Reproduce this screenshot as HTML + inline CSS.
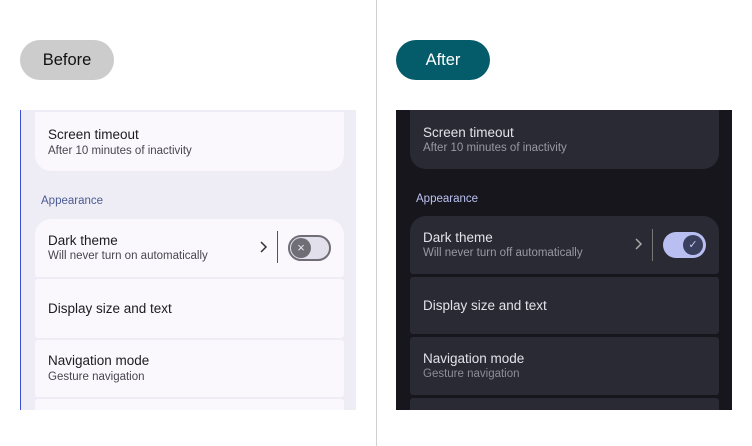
<!DOCTYPE html><html><head><style>
*{margin:0;padding:0;box-sizing:border-box}
body{width:752px;height:446px;background:#fff;position:relative;overflow:hidden;font-family:"Liberation Sans",sans-serif}
.a{position:absolute}
.pill{position:absolute;top:40px;width:94px;height:40px;border-radius:20px;font-size:16.5px;display:flex;align-items:center;justify-content:center}
.panel{position:absolute;top:110px;width:336px;height:300px;overflow:hidden}
.card{position:absolute;left:14px;width:309px}
.t{position:absolute;left:13px;font-size:13.5px}
.s{position:absolute;left:13px;font-size:11.5px}
</style></head><body>
<div class="a" style="left:376px;top:0;width:1px;height:446px;background:#d0d0d0"></div>
<div class="pill" style="left:20px;background:#cccccc;color:#111">Before</div>
<div class="pill" style="left:396px;background:#045c6a;color:#fff">After</div>

<div class="panel" style="left:20px;background:#eeedf5;border-left:1px solid #3d4fd6">
 <div class="card" style="top:2px;height:59px;background:#faf8fd;border-radius:0 0 16px 16px"><div class="t" style="top:15px;color:#1c1b1f">Screen timeout</div><div class="s" style="top:33px;color:#48464e">After 10 minutes of inactivity</div></div>
 <div class="a" style="left:20px;top:85px;font-size:11.5px;color:#4c5a94">Appearance</div>
 <div class="card" style="top:109px;height:58px;background:#faf8fd;border-radius:16px 16px 3px 3px"><div class="t" style="top:14px;color:#1c1b1f">Dark theme</div><div class="s" style="top:31px;color:#48464e">Will never turn on automatically</div>
  <svg class="a" style="left:224px;top:21px" width="10" height="14"><path d="M2 2 L7 7 L2 12" stroke="#333" stroke-width="1.5" fill="none"/></svg>
  <div class="a" style="left:242px;top:12px;width:1px;height:32px;background:#555"></div>
  <div class="a" style="left:253px;top:16px;width:43px;height:26px;border-radius:13px;background:#e2e0ea;border:2px solid #6f6d76"></div>
  <div class="a" style="left:256px;top:19px;width:20px;height:20px;border-radius:50%;background:#6f6d76;color:#e8e6ee;font-size:13px;text-align:center;line-height:20px">×</div>
 </div>
 <div class="card" style="top:169px;height:59px;background:#faf8fd;border-radius:3px"><div class="t" style="top:22px;color:#1c1b1f">Display size and text</div></div>
 <div class="card" style="top:230px;height:57px;background:#faf8fd;border-radius:3px"><div class="t" style="top:13px;color:#1c1b1f">Navigation mode</div><div class="s" style="top:31px;color:#48464e">Gesture navigation</div></div>
 <div class="card" style="top:289px;height:30px;background:#faf8fd;border-radius:3px"></div>
</div>

<div class="panel" style="left:396px;background:#16161c">
 <div class="card" style="top:0;height:59px;background:#292a33;border-radius:0 0 16px 16px"><div class="t" style="top:15px;color:#e4e2ea">Screen timeout</div><div class="s" style="top:32px;color:#9a98a2">After 10 minutes of inactivity</div></div>
 <div class="a" style="left:20px;top:83px;font-size:11.5px;color:#bcc3f3">Appearance</div>
 <div class="card" style="top:106px;height:58px;background:#292a33;border-radius:16px 16px 3px 3px"><div class="t" style="top:14px;color:#e4e2ea">Dark theme</div><div class="s" style="top:31px;color:#9a98a2">Will never turn off automatically</div>
  <svg class="a" style="left:224px;top:21px" width="10" height="14"><path d="M2 2 L7 7 L2 12" stroke="#aaa" stroke-width="1.5" fill="none"/></svg>
  <div class="a" style="left:242px;top:13px;width:1px;height:32px;background:#777"></div>
  <div class="a" style="left:253px;top:16px;width:43px;height:26px;border-radius:13px;background:#b9bff0"></div>
  <div class="a" style="left:273px;top:19px;width:20px;height:20px;border-radius:50%;background:#3a3f5e;color:#c8ccf4;font-size:11px;text-align:center;line-height:20px">✓</div>
 </div>
 <div class="card" style="top:167px;height:57px;background:#292a33;border-radius:3px"><div class="t" style="top:21px;color:#e4e2ea">Display size and text</div></div>
 <div class="card" style="top:227px;height:58px;background:#292a33;border-radius:3px"><div class="t" style="top:14px;color:#e4e2ea">Navigation mode</div><div class="s" style="top:31px;color:#8e8c96">Gesture navigation</div></div>
 <div class="card" style="top:288px;height:30px;background:#292a33;border-radius:3px"></div>
</div>
</body></html>
